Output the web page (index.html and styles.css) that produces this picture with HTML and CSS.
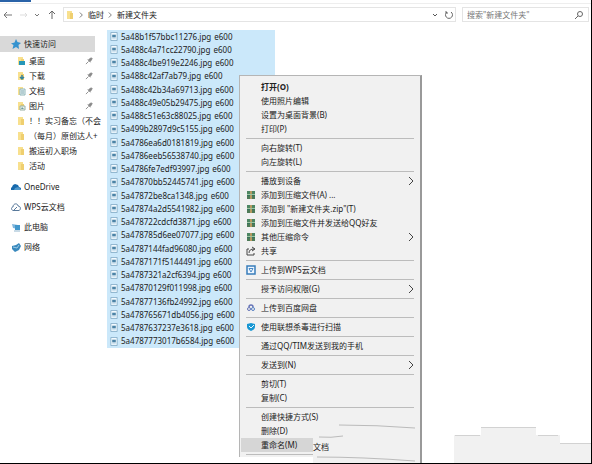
FILE: index.html
```html
<!DOCTYPE html>
<html lang="zh-CN">
<head>
  <meta charset="UTF-8">
  <meta name="viewport" content="width=device-width, initial-scale=1.0">
  <title>新建文件夹</title>
  <link rel="stylesheet" href="styles.css">
</head>
<body>

  <!-- shared icons -->
  <svg class="defs" aria-hidden="true">
    <symbol id="folder" viewBox="0 0 10 10"><path d="M2 1h5v8H2z" fill="#f8e08e"/><path d="M5 3h3v6H5z" fill="#efcf70"/></symbol>
    <symbol id="pin" viewBox="0 0 10 10"><path d="M1 9l3-3M3 4l3 3M4 4l3-2 1 1-2 3z" fill="#888" stroke="#888"/></symbol>
    <symbol id="pic" viewBox="0 0 8 10"><path d="M.5.5h7v9h-7z" fill="#f4fbff" stroke="#86aec8"/><path d="M2 3h4v3H2z" fill="#4b83a6"/><path d="M2 7.500h4" stroke="#b9d5e6"/></symbol>
    <symbol id="rar" viewBox="0 0 10 10"><path d="M1 1h8v3H1z" fill="#4d8663"/><path d="M1 4h8v2H1z" fill="#35735d"/><path d="M1 6h8v3H1z" fill="#4e7a58"/><path d="M4 1h2v8H4z" fill="#b59a62"/><path d="M1 4.500h8" stroke="#9fc5a0"/></symbol>
    <symbol id="more" viewBox="0 0 6 10"><path d="M1 1l4 4-4 4" fill="none" stroke="#444"/></symbol>
  </svg>

  <div class="tabStrip"><div class="fileTab"></div></div>

  <header class="toolbar">
    <div class="arrows">
      <button aria-label="后退"><svg viewBox="0 0 10 10"><path d="M9 5H1M4 2L1 5l3 3" fill="none" stroke="#777"/></svg></button>
      <button aria-label="前进"><svg viewBox="0 0 10 10"><path d="M2 5h7M7 3l2 2-2 2" fill="none" stroke="#ddd"/></svg></button>
      <button aria-label="最近"><svg viewBox="0 0 10 10"><path d="M3 4l2 2 2-2" fill="none" stroke="#777"/></svg></button>
      <button aria-label="上移"><svg viewBox="0 0 10 10"><path d="M5 9V1M2 4l3-3 3 3" fill="none" stroke="#666"/></svg></button>
    </div>
    <div class="address">
      <svg class="icon" viewBox="0 0 10 10"><use href="#folder"/></svg>
      <svg class="crumbArrow" viewBox="0 0 6 10"><path d="M1 2l3 3-3 3" fill="none" stroke="#666"/></svg>
      <button class="crumb">临时</button>
      <svg class="crumbArrow" viewBox="0 0 6 10"><path d="M1 2l3 3-3 3" fill="none" stroke="#666"/></svg>
      <button class="crumb">新建文件夹</button>
      <button class="push" aria-label="历史"><svg viewBox="0 0 10 10"><path d="M3 4l2 2 2-2" fill="none" stroke="#555"/></svg></button>
      <button aria-label="刷新"><svg viewBox="0 0 10 10"><path d="M3 2a3.500 3.500 0 1 0 4 0M1 2h2v2" fill="none" stroke="#666"/></svg></button>
    </div>
    <label class="search">
      <input type="search" aria-label="搜索" placeholder='搜索"新建文件夹"'>
      <svg class="icon" viewBox="0 0 10 10"><circle cx="6" cy="4" r="2.500" fill="none" stroke="#666"/><path d="M4 6L1 9" stroke="#666"/></svg>
    </label>
  </header>

  <main>
    <nav class="sidebar">
      <a class="root active" href="#"><svg class="icon" viewBox="0 0 10 10"><path d="M5 0l1.500 3L10 4 7.500 6l.5 4-3-2-3.500 2L2.500 6 0 4.500l3.500-1z" fill="#3693cf"/></svg>快速访问</a>
      <a class="sub" href="#"><svg class="icon" viewBox="0 0 10 10"><use href="#folder"/><path d="M3 5h6v4H3z" fill="#2697b8"/></svg>桌面<svg class="pin"><use href="#pin"/></svg></a>
      <a class="sub" href="#"><svg class="icon" viewBox="0 0 10 10"><use href="#folder"/><path d="M6 4v4M4 6l2 2 2-2" fill="none" stroke="#35849b" stroke-width="1.500"/></svg>下载<svg class="pin"><use href="#pin"/></svg></a>
      <a class="sub" href="#"><svg class="icon" viewBox="0 0 10 10"><use href="#folder"/><path d="M4 3h5v6H4z" fill="#eef6f8" stroke="#8fb6b9"/><path d="M5 5h3M5 7h3" stroke="#7ba5ad"/></svg>文档<svg class="pin"><use href="#pin"/></svg></a>
      <a class="sub" href="#"><svg class="icon" viewBox="0 0 10 10"><use href="#folder"/><path d="M4 5h5v4H4z" fill="#edf4ee" stroke="#9ab0a4"/><path d="M5 8l1-2 2 2z" fill="#6d9a9a"/></svg>图片<svg class="pin"><use href="#pin"/></svg></a>
      <a class="sub" href="#"><svg class="icon"><use href="#folder"/></svg>！！实习备忘（不会</a>
      <a class="sub" href="#"><svg class="icon"><use href="#folder"/></svg>（每月）原创达人+</a>
      <a class="sub" href="#"><svg class="icon"><use href="#folder"/></svg>搬运初入职场</a>
      <a class="sub" href="#"><svg class="icon"><use href="#folder"/></svg>活动</a>
      <a class="root" href="#"><svg class="icon" viewBox="0 0 10 10"><path d="M0 8V6l1-1 1-2 2-1 3 1 1 2 2 1v2z" fill="#1769ac"/><path d="M3 8l1-2 3-1 3 2v1z" fill="#5299cb"/></svg>OneDrive</a>
      <a class="root" href="#"><svg class="icon" viewBox="0 0 10 10"><path d="M2 8.500C0 8 0 5 2 5c0-4 5-4 5-1 3 0 3 4 1 4.500zM3 8l3-3" fill="none" stroke="#58799b"/></svg>WPS云文档</a>
      <a class="root" href="#"><svg class="icon" viewBox="0 0 10 10"><path d="M1 2l6 1v4L2 6z" fill="#7eb5dc"/><path d="M4 3h5v5H4z" fill="#4297cb"/><path d="M3 9h6" stroke="#91b5cd"/></svg>此电脑</a>
      <a class="root" href="#"><svg class="icon" viewBox="0 0 10 10"><path d="M1 4l4-1 3-2 2 3-2 4-4 2-3-3z" fill="#3989bd"/><path d="M2 5l4 1 2-3" fill="none" stroke="#9dcbe7"/></svg>网络</a>
    </nav>

    <ul class="files" id="files"></ul>
  </main>

  <!-- right-click menu -->
  <div class="menu">
    <button class="bold">打开(O)</button>
    <button>使用照片编辑</button>
    <button>设置为桌面背景(B)</button>
    <button>打印(P)</button>
    <hr>
    <button>向右旋转(T)</button>
    <button>向左旋转(L)</button>
    <hr>
    <button>播放到设备<svg class="more"><use href="#more"/></svg></button>
    <button><svg class="icon"><use href="#rar"/></svg>添加到压缩文件(A) ...</button>
    <button><svg class="icon"><use href="#rar"/></svg>添加到 "新建文件夹.zip"(T)</button>
    <button><svg class="icon"><use href="#rar"/></svg>添加到压缩文件并发送给QQ好友</button>
    <button><svg class="icon"><use href="#rar"/></svg>其他压缩命令<svg class="more"><use href="#more"/></svg></button>
    <button><svg class="icon" viewBox="0 0 10 10"><path d="M3 3H1v6h7V7M3 7c0-3 2-4 5-4M6 1l3 2-3 2" fill="none" stroke="#444"/></svg>共享</button>
    <hr>
    <button><svg class="icon" viewBox="0 0 10 10"><path d="M1 1h8v8H1z" fill="#eef6ff" stroke="#397dbb" stroke-width="1.500"/><path d="M3 3.500h4L5 7z" fill="none" stroke="#4a8bc8"/></svg>上传到WPS云文档</button>
    <hr>
    <button>授予访问权限(G)<svg class="more"><use href="#more"/></svg></button>
    <hr>
    <button><svg class="icon" viewBox="0 0 10 10"><path d="M3 4a2 2 0 0 1 4 0" fill="none" stroke="#6674b6" stroke-width="1.500"/><circle cx="3" cy="6" r="1.500" fill="none" stroke="#6674b6"/><circle cx="7" cy="6" r="1.500" fill="none" stroke="#5580c4"/></svg>上传到百度网盘</button>
    <hr>
    <button><svg class="icon" viewBox="0 0 10 10"><path d="M5 1l4 1v3c0 2-2 3-4 4-2-1-4-2-4-4V2z" fill="#1897d3"/><path d="M3 4l2 2 3-3" fill="none" stroke="#e6f8ff"/></svg>使用联想杀毒进行扫描</button>
    <hr>
    <button>通过QQ/TIM发送到我的手机</button>
    <hr>
    <button>发送到(N)<svg class="more"><use href="#more"/></svg></button>
    <hr>
    <button>剪切(T)</button>
    <button>复制(C)</button>
    <hr>
    <button>创建快捷方式(S)</button>
    <button>删除(D)</button>
    <button class="hover">重命名(M)</button>
    <hr>
  </div>

  <!-- torn corner of the submenu behind -->
  <div class="torn">
    <svg viewBox="0 0 109 46">
      <path d="M6 4h103v42H0V22h6z" fill="#f1f1f1"/>
      <path d="M26 8q38 0 76 3M6 20q12 1 24-1M4 40q45 0 98 4" fill="none" stroke="#bbb"/>
      <path d="M108 0v46" stroke="#999" stroke-width="2"/>
    </svg>
    <span>文档</span>
  </div>
  <svg class="blocks" viewBox="0 0 137 36">
    <path d="M0 36V8h27V1h55v7h24v8h31v20z" fill="#f1f1f1"/>
    <path d="M1 8.500h25M27 .500h55M84 8.500h20M106 16.500h31" stroke="#d2d2d2"/>
  </svg>

  <script>
    const names = [
      "5a48b1f57bbc11276", "5a488c4a71cc22790", "5a488c4be919e2246", "5a488c42af7ab79",
      "5a488c42b34a69713", "5a488c49e05b29475", "5a488c51e63c88025", "5a499b2897d9c5155",
      "5a4786ea6d0181819", "5a4786eeb56538740", "5a4786fe7edf93997", "5a47870bb52445741",
      "5a47872be8ca1348", "5a47874a2d5541982", "5a478722cdcfd3871", "5a478785d6ee07077",
      "5a4787144fad96080", "5a4787171f5144491", "5a4787321a2cf6394", "5a47870129f011998",
      "5a47877136fb24992", "5a478765671db4056", "5a4787637237e3618", "5a4787773017b6584"
    ];
    const files = document.getElementById("files");
    names.forEach(name => {
      const li = document.createElement("li");
      li.innerHTML = `<svg class="pic"><use href="#pic"/></svg><span>${name}.jpg</span><span>e600</span>`;
      files.appendChild(li);
    });
  </script>
</body>
</html>
```

FILE: styles.css
```css
* { margin: 0; padding: 0; box-sizing: border-box; }
html, body { height: 100%; }
body {
  display: flex;
  flex-direction: column;
  position: relative;
  overflow: hidden;
  background: #fff;
  border-right: 1px solid #000;
  border-bottom: 1px solid #000;
  font-family: "Noto Sans", "Noto Sans CJK SC", sans-serif;
  font-size: 8px;
  line-height: 14px;
  color: #222;
}
button, input {
  font: inherit;
  color: inherit;
  background: none;
  border: none;
  outline: none;
}
a { color: inherit; text-decoration: none; }
svg { flex: none; }
.defs { position: absolute; width: 0; height: 0; }
.icon { width: 10px; height: 10px; }
.pin { width: 9px; height: 9px; }

.tabStrip { height: 4px; border-bottom: 1px solid #eee; }
.fileTab { width: 31px; height: 2px; background: #2a63a8; }

/* toolbar */
.toolbar {
  display: flex;
  gap: 6px;
  padding: 3px 2px 0 3px;
}
.toolbar button { display: flex; align-items: center; }
.toolbar button svg { width: 10px; height: 10px; }
.arrows { display: flex; width: 54px; justify-content: space-between; }
.address {
  flex: 1;
  display: flex;
  align-items: center;
  gap: 4px;
  height: 15px;
  padding: 0 1px;
  border: 1px solid #e4e4e4;
}
.crumbArrow { width: 5px; height: 10px; }
.address .push { margin-left: auto; }
.search {
  display: flex;
  align-items: center;
  width: 127px;
  height: 15px;
  padding: 0 4px;
  border: 1px solid #e4e4e4;
}
.search input { flex: 1; min-width: 0; }
.search input::placeholder { color: #777; }

/* body */
main { flex: 1; display: flex; gap: 12px; padding-top: 8px; }
.sidebar { width: 95px; padding-top: 6px; }
.sidebar a {
  display: flex;
  align-items: center;
  white-space: nowrap;
}
.sidebar .root { height: 16px; margin-bottom: 4px; padding-left: 11px; gap: 3px; }
.sidebar .active { margin-bottom: 1px; background: #d9d9d9; }
.sidebar .sub { height: 15px; padding-left: 16px; gap: 3px; }
.sidebar .sub + .root { margin-top: 6px; }
.sidebar .pin { margin-left: auto; margin-right: 1px; }

.files { width: 168px; align-self: flex-start; list-style: none; background: #cbe8fa; }
.files li {
  display: flex;
  align-items: center;
  gap: 3px;
  height: 13px;
  padding-left: 3px;
}
.files li:nth-child(4n) { height: 14px; }
.pic { width: 8px; height: 9px; }

/* context menu */
.menu {
  position: absolute;
  left: 239px;
  top: 75px;
  width: 183px;
  padding: 4px 1px 0;
  background: #f1f1f1;
  border: 1px solid #b5b5b5;
  border-bottom: none;
  border-right: 2px solid #999;
}
.menu button {
  position: relative;
  display: block;
  width: 100%;
  height: 14px;
  padding-left: 20px;
  text-align: left;
  white-space: nowrap;
}
.menu hr { margin: 2px 5px; border: none; border-top: 1px solid #bcbcbc; }
.menu .icon { position: absolute; left: 5px; top: 2px; }
.menu .more { position: absolute; right: 5px; top: 2px; width: 6px; height: 10px; }
.menu .bold { font-weight: bold; }
.menu .hover { width: 72px; background: #d6d6d6; }

.torn {
  position: absolute;
  left: 313px;
  bottom: 0;
  width: 109px;
  height: 46px;
}
.torn svg { display: block; width: 100%; height: 100%; }
.torn span { position: absolute; left: 0; top: 23px; }
.blocks {
  position: absolute;
  right: 0;
  bottom: 0;
  width: 137px;
  height: 36px;
}
```
